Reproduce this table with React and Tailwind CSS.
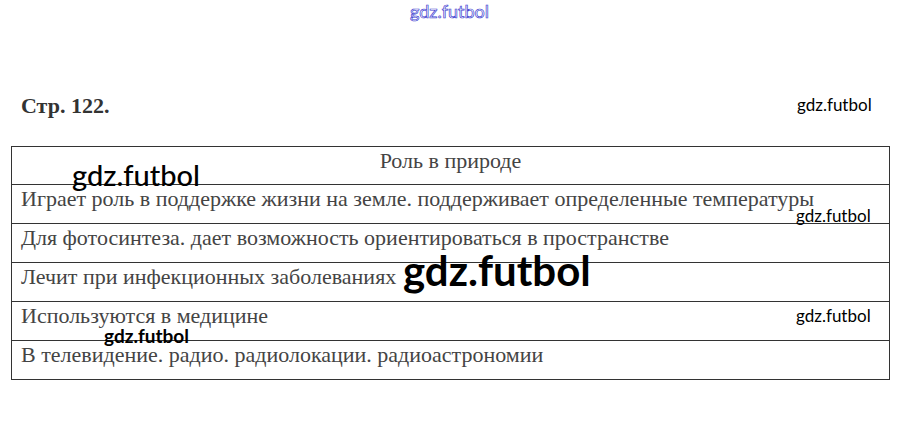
export default function App() {
  const rows = [
    "Играет роль в поддержке жизни на земле. поддерживает определенные температуры",
    "Для фотосинтеза. дает возможность ориентироваться в пространстве",
    "Лечит при инфекционных заболеваниях",
    "Используются в медицине",
    "В телевидение. радио. радиолокации. радиоастрономии",
  ];
  return (
    <div className="relative w-[901px] h-[424px] bg-white overflow-hidden flex flex-col font-['Liberation_Serif','DejaVu_Serif',serif]">
      <div className="pt-[93px] pl-[21px] h-[146px]">
        <div className="text-[22px] font-bold text-[#333] leading-[26px]">Стр. 122.</div>
      </div>
      <div className="ml-[11px] w-[879px] flex flex-col border border-[#333] text-[#444] text-[22px] leading-[26px]">
        <div className="h-[38px] pt-[1px] text-center border-b border-[#333]">Роль в природе</div>
        {rows.map((r, i) => (
          <div
            key={i}
            className={
              i < rows.length - 1
                ? "h-[39px] pt-[1px] pl-[9px] border-b border-[#333]"
                : "h-[38px] pt-[1px] pl-[9px]"
            }
          >
            {r}
          </div>
        ))}
      </div>

      <div className="absolute left-[410px] top-0 text-[18px] leading-[22px] text-white font-['Lato',sans-serif] [-webkit-text-stroke:0.7px_#3b3bd0]">
        gdz.futbol
      </div>
      <div className="absolute left-[797px] top-[94px] text-[17px] leading-[22px] text-black font-['Lato',sans-serif]">
        gdz.futbol
      </div>
      <div className="absolute left-[72px] top-[158px] text-[29px] leading-[34px] text-black font-medium font-['Lato',sans-serif]">
        gdz.futbol
      </div>
      <div className="absolute left-[796px] top-[205px] text-[17px] leading-[22px] text-black font-['Lato',sans-serif]">
        gdz.futbol
      </div>
      <div className="absolute left-[403px] top-[245px] text-[42px] leading-[50px] text-black font-bold font-['Lato',sans-serif]">
        gdz.futbol
      </div>
      <div className="absolute left-[796px] top-[305px] text-[17px] leading-[22px] text-black font-['Lato',sans-serif]">
        gdz.futbol
      </div>
      <div className="absolute left-[104px] top-[325px] text-[19px] leading-[22px] text-black font-bold font-['Lato',sans-serif]">
        gdz.futbol
      </div>
    </div>
  );
}
